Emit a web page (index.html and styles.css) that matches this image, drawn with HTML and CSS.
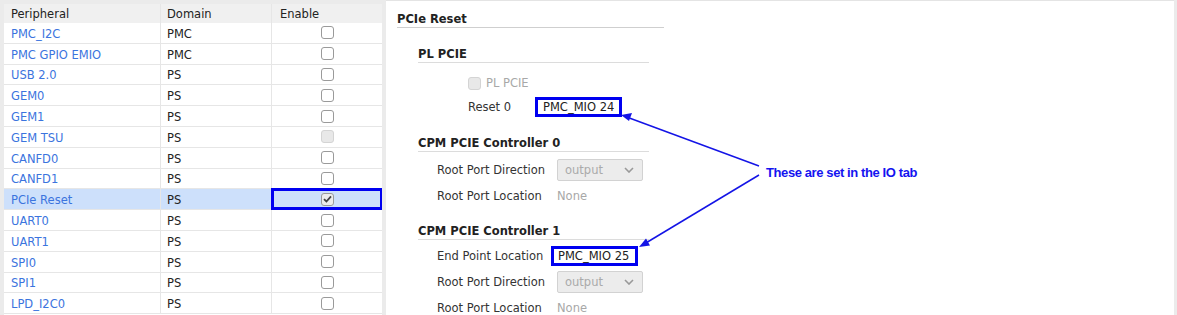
FILE: index.html
```html
<!DOCTYPE html>
<html lang="en">
<head>
    <meta charset="UTF-8">
    <title>PCIe Reset</title>
    <link rel="stylesheet" href="styles.css">
</head>
<body>
    <div class="left">
        <div class="table">
            <div class="row head">
                <div class="cell">Peripheral</div>
                <div class="cell">Domain</div>
                <div class="cell">Enable</div>
            </div>
            <div class="row"><div class="cell link">PMC_I2C</div><div class="cell">PMC</div><div class="cell box"><span class="check"></span></div></div>
            <div class="row"><div class="cell link">PMC GPIO EMIO</div><div class="cell">PMC</div><div class="cell box"><span class="check"></span></div></div>
            <div class="row"><div class="cell link">USB 2.0</div><div class="cell">PS</div><div class="cell box"><span class="check"></span></div></div>
            <div class="row"><div class="cell link">GEM0</div><div class="cell">PS</div><div class="cell box"><span class="check"></span></div></div>
            <div class="row"><div class="cell link">GEM1</div><div class="cell">PS</div><div class="cell box"><span class="check"></span></div></div>
            <div class="row"><div class="cell link">GEM TSU</div><div class="cell">PS</div><div class="cell box"><span class="check disabled"></span></div></div>
            <div class="row"><div class="cell link">CANFD0</div><div class="cell">PS</div><div class="cell box"><span class="check"></span></div></div>
            <div class="row"><div class="cell link">CANFD1</div><div class="cell">PS</div><div class="cell box"><span class="check"></span></div></div>
            <div class="row selected"><div class="cell link">PCIe Reset</div><div class="cell">PS</div><div class="cell box marked"><span class="check on">
                <svg width="9" height="8" viewBox="0 0 9 8"><path d="M1 4.2 L3.4 6.5 L8 1.3" fill="none" stroke="#444" stroke-width="1.8"/></svg>
            </span></div></div>
            <div class="row"><div class="cell link">UART0</div><div class="cell">PS</div><div class="cell box"><span class="check"></span></div></div>
            <div class="row"><div class="cell link">UART1</div><div class="cell">PS</div><div class="cell box"><span class="check"></span></div></div>
            <div class="row"><div class="cell link">SPI0</div><div class="cell">PS</div><div class="cell box"><span class="check"></span></div></div>
            <div class="row"><div class="cell link">SPI1</div><div class="cell">PS</div><div class="cell box"><span class="check"></span></div></div>
            <div class="row"><div class="cell link">LPD_I2C0</div><div class="cell">PS</div><div class="cell box"><span class="check"></span></div></div>
        </div>
    </div>

    <div class="right">
        <div class="title">PCIe Reset</div>

        <div class="group">
            <div class="heading first">PL PCIE</div>
            <div class="pl-row top">
                <span class="check disabled"></span>
                <span class="muted">PL PCIE</span>
            </div>
            <div class="pl-row">
                <span class="pl-label">Reset 0</span>
                <span class="value">PMC_MIO 24</span>
            </div>

            <div class="heading ctl0">CPM PCIE Controller 0</div>
            <div class="field first">
                <span class="label">Root Port Direction</span>
                <span class="select">output
                    <svg width="10" height="6" viewBox="0 0 10 6"><path d="M1 1 L5 5 L9 1" fill="none" stroke="#999" stroke-width="1.6"/></svg>
                </span>
            </div>
            <div class="field">
                <span class="label">Root Port Location</span>
                <span class="muted">None</span>
            </div>

            <div class="heading">CPM PCIE Controller 1</div>
            <div class="field first tight">
                <span class="label">End Point Location</span>
                <span class="value shift">PMC_MIO 25</span>
            </div>
            <div class="field">
                <span class="label">Root Port Direction</span>
                <span class="select">output
                    <svg width="10" height="6" viewBox="0 0 10 6"><path d="M1 1 L5 5 L9 1" fill="none" stroke="#999" stroke-width="1.6"/></svg>
                </span>
            </div>
            <div class="field">
                <span class="label">Root Port Location</span>
                <span class="muted">None</span>
            </div>
        </div>
    </div>

    <!-- annotation -->
    <div class="note">These are set in the IO tab</div>
    <svg class="arrows" width="1177" height="315" viewBox="0 0 1177 315">
        <g stroke="#1414e6" stroke-width="1.5" fill="#1414e6">
            <line x1="759" y1="166" x2="628" y2="117.5"/>
            <polygon points="621,115 632,113 629,121" stroke="none"/>
            <line x1="759" y1="175" x2="645" y2="243.5"/>
            <polygon points="639,247 646,238.5 650,245.5" stroke="none"/>
        </g>
    </svg>
</body>
</html>
```

FILE: styles.css
```css
body {
    margin: 0;
    width: 1177px;
    height: 315px;
    overflow: hidden;
    display: flex;
    background: #ebebeb;
    font-family: "DejaVu Sans", sans-serif;
    font-size: 11.5px;
    color: #222;
}
.left {
    width: 378px;
    padding: 4px 0 0 4px;
    margin-right: 4px;
}
.table {
    background: #fff;
    height: 100%;
    overflow: hidden;
}
.row {
    display: grid;
    grid-template-columns: 157px 111px 110px;
    height: 20.8px;
    box-sizing: border-box;
    border-bottom: 1px solid #e6e6e6;
}
.row.head {
    height: 19px;
    background: #f0f0f0;
    border-bottom: none;
}
.cell {
    display: flex;
    align-items: center;
    padding: 2px 0 0 6px;
    border-right: 1px solid #e6e6e6;
}
.cell:first-child {
    padding-left: 7px;
}
.head .cell {
    padding-top: 0;
}
.head .cell:last-child {
    padding-left: 8px;
}
.cell:last-child {
    border-right: none;
}
.link {
    color: #3b74de;
}
.box {
    justify-content: center;
    padding: 0;
}
.selected {
    background: #cde0fb;
}
.marked {
    outline: 3px solid #0000f0;
    outline-offset: -2px;
}
.check {
    display: inline-flex;
    align-items: center;
    justify-content: center;
    width: 11px;
    height: 11px;
    border: 1px solid #9a9a9a;
    border-radius: 3px;
    background: #fff;
}
.check.on {
    background: #ececec;
}
.check.disabled {
    background: #e8e8e8;
    border-color: #d4d4d4;
}
.right {
    flex: 1;
    margin-right: 3px;
    background: #fff;
    border-top: 1px solid #e4e4e4;
    padding-left: 11px;
}
.title {
    width: 267px;
    margin-top: 10px;
    line-height: 16px;
    font-weight: bold;
    border-bottom: 1px solid #cfcfcf;
}
.group {
    margin-left: 21px;
}
.heading {
    width: 231px;
    margin-top: 15px;
    line-height: 16px;
    font-weight: bold;
    border-bottom: 1px solid #dcdcdc;
}
.heading.first {
    margin-top: 18px;
}
.heading.ctl0 {
    margin-top: 16px;
}
.pl-row {
    display: flex;
    align-items: center;
    gap: 5px;
    height: 24px;
    padding-left: 50px;
}
.pl-row.top {
    margin-top: 8px;
}
.pl-label {
    width: 62px;
    color: #333;
}
.muted {
    color: #a8a8a8;
}
.value {
    box-sizing: border-box;
    width: 87px;
    height: 20px;
    padding-left: 5px;
    border: 3px solid #0000f0;
    display: flex;
    align-items: center;
    color: #222;
}
.value.shift {
    margin-left: -6px;
    padding-left: 4px;
}
.field {
    display: flex;
    align-items: center;
    height: 25.7px;
    padding-left: 19px;
}
.field.first {
    margin-top: 5px;
}
.field.tight {
    margin-top: 3px;
}
.label {
    width: 120px;
    color: #333;
}
.select {
    box-sizing: border-box;
    width: 86px;
    height: 22px;
    padding: 0 8px 0 7px;
    display: flex;
    align-items: center;
    justify-content: space-between;
    background: #ececec;
    border: 1px solid #d2d2d2;
    border-radius: 2px;
    color: #aaa;
}
.note {
    position: absolute;
    left: 766px;
    top: 165px;
    font-family: "Liberation Sans", sans-serif;
    font-weight: bold;
    font-size: 13px;
    letter-spacing: -0.4px;
    color: #1414f0;
}
.arrows {
    position: absolute;
    left: 0;
    top: 0;
}
```
